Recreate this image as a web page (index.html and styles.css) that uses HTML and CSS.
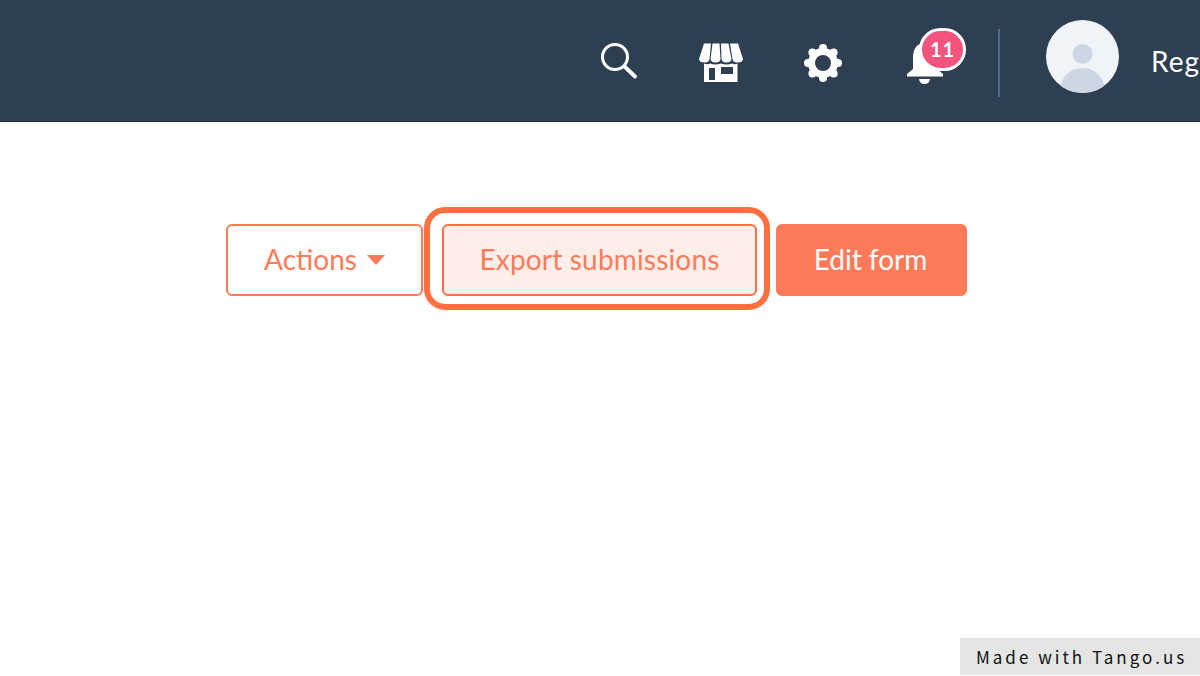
FILE: index.html
```html
<!DOCTYPE html>
<html lang="en">
<head>
<meta charset="utf-8">
<title>Form submissions</title>
<link rel="stylesheet" href="styles.css">
</head>
<body>
<header class="topbar">
  <svg class="icon icon-search" viewBox="0 0 36 36" width="36" height="36"><circle cx="14" cy="14" r="12.500" fill="none" stroke="#fff" stroke-width="3"/><path d="M23.500 23.500 34 33.500" fill="none" stroke="#fff" stroke-width="3.800" stroke-linecap="round"/></svg>
  <svg class="icon icon-store" viewBox="0 0 44 40" width="44" height="40"><path fill="#fff" d="M5 .5H12L10.500 16Q10 19.500 5.500 19.500 .5 19.500 0 16ZM13.500 .5H20.500L21.500 16Q21 19.500 16.500 19.500 12 19.500 11.500 16ZM22 .5H29.500L32.500 16Q32 19.500 27.500 19.500 23 19.500 22.500 16ZM31 .5H39L44 16Q43.500 19.500 38.500 19.500 34 19.500 33.500 16Z"/><path fill="#fff" fill-rule="evenodd" d="M5 20.500Q8 22 11 20.500 16 22.500 22 20.500 28 22.500 33 20.500 36 22 38.500 20.500V39H5ZM10 25V37H16V25ZM22 24V31H34V24Z"/></svg>
  <svg class="icon icon-gear" viewBox="0 0 38 38" width="38" height="38"><g fill="#fff"><circle cx="19" cy="4" r="4"/><circle cx="19" cy="34" r="4"/><circle cx="4" cy="19" r="4"/><circle cx="34" cy="19" r="4"/><circle cx="8.400" cy="8.400" r="4"/><circle cx="29.600" cy="8.400" r="4"/><circle cx="8.400" cy="29.600" r="4"/><circle cx="29.600" cy="29.600" r="4"/></g><circle cx="19" cy="19" r="11.500" fill="none" stroke="#fff" stroke-width="7"/></svg>
  <div class="bell">
    <svg class="icon" viewBox="0 0 38 44" width="38" height="44"><path fill="#fff" d="M17 3C10 4 7 10 7 18V29L1 34V36.500H37V34L31 29V18C31 10 26 3 17 3Z"/><path fill="#fff" d="M13 39H24Q23.500 44 18.500 44 13.500 44 13 39Z"/></svg>
    <span class="badge">11</span>
  </div>
  <span class="divider"></span>
  <svg class="avatar" viewBox="0 0 73 73" width="73" height="73"><defs><clipPath id="avatar-clip"><circle cx="36.500" cy="36.500" r="36.500"/></clipPath></defs><circle cx="36.500" cy="36.500" r="36.500" fill="#f0f3f7"/><circle cx="36.500" cy="34" r="10" fill="#cdd7e3"/><ellipse cx="36.500" cy="69" rx="22" ry="21" fill="#cdd7e3" clip-path="url(#avatar-clip)"/></svg>
  <span class="user">Reg</span>
</header>
<main class="actions">
  <button class="btn btn-outline"><span>Actions</span><span class="caret"></span></button>
  <button class="btn btn-soft">Export submissions</button>
  <button class="btn btn-solid">Edit form</button>
</main>
<div class="watermark">Made with Tango.us</div>
</body>
</html>
```
FILE: styles.css
```css
* { box-sizing: border-box; }
html, body { margin: 0; height: 100%; }
body {
  width: 1200px;
  height: 676px;
  overflow: hidden;
  position: relative;
  background: #fff;
  font-family: Lato, "Open Sans", sans-serif;
}
.topbar {
  height: 122px;
  background: #2e3f52;
  border-bottom: 1px solid #1c2d40;
  display: flex;
  align-items: center;
  padding-left: 601px;
  overflow: hidden;
  white-space: nowrap;
}
.icon { display: block; flex: none; }
.icon-search { margin-top: 1px; }
.icon-store { margin-left: 62px; margin-top: 5px; }
.icon-gear { margin-left: 61px; margin-top: 4px; }
.bell { position: relative; margin-left: 64px; flex: none; margin-top: 3px; width: 38px; height: 44px; }
.badge {
  position: absolute;
  left: 13px;
  top: -12px;
  width: 47px;
  height: 43px;
  border-radius: 22px;
  border: 3px solid #fff;
  background: #f2547d;
  color: #fff;
  font-size: 20px;
  font-weight: 700;
  letter-spacing: 1px;
  line-height: 36px;
  text-align: center;
}
.divider { width: 2px; height: 68px; margin-left: 54px; background: #4c6d96; flex: none; margin-top: 4px; }
.avatar { margin-left: 46px; flex: none; margin-bottom: 8px; }
.user { margin-left: 32px; color: #fff; font-size: 28px; letter-spacing: 1px; flex: none; margin-top: 1px; }
.actions {
  display: flex;
  gap: 19px;
  padding: 102px 0 0 226px;
}
.btn {
  height: 72px;
  border-radius: 6px;
  border: 2px solid #ff7a59;
  font: 400 28px Lato, sans-serif;
  color: #ff7a59;
  padding: 0 0 2px;
  display: flex;
  align-items: center;
  justify-content: center;
}
.btn-outline { width: 197px; background: #fff; }
.btn-soft { width: 315px; background: #feeee9; position: relative; letter-spacing: .18px; border-color: #ff6f45; }
.btn-soft::after {
  content: "";
  position: absolute;
  inset: -19px -15px -16px -20px;
  border: 6px solid #ff7040;
  border-radius: 21px;
}
.btn-solid { width: 191px; background: #ff7a59; color: #fff; padding-right: 2px; }
.caret {
  width: 0; height: 0;
  margin: 2px 0 0 10px;
  border-left: 9px solid transparent;
  border-right: 9px solid transparent;
  border-top: 10px solid #ff7a59;
}
.watermark {
  position: absolute;
  left: 960px;
  top: 638px;
  width: 240px;
  height: 37px;
  background: #e5e5e5;
  color: #111;
  font: 400 17px "Noto Sans CJK JP", "Noto Sans", sans-serif;
  letter-spacing: 3px;
  line-height: 37px;
  padding-left: 16px;
  white-space: nowrap;
}
```
